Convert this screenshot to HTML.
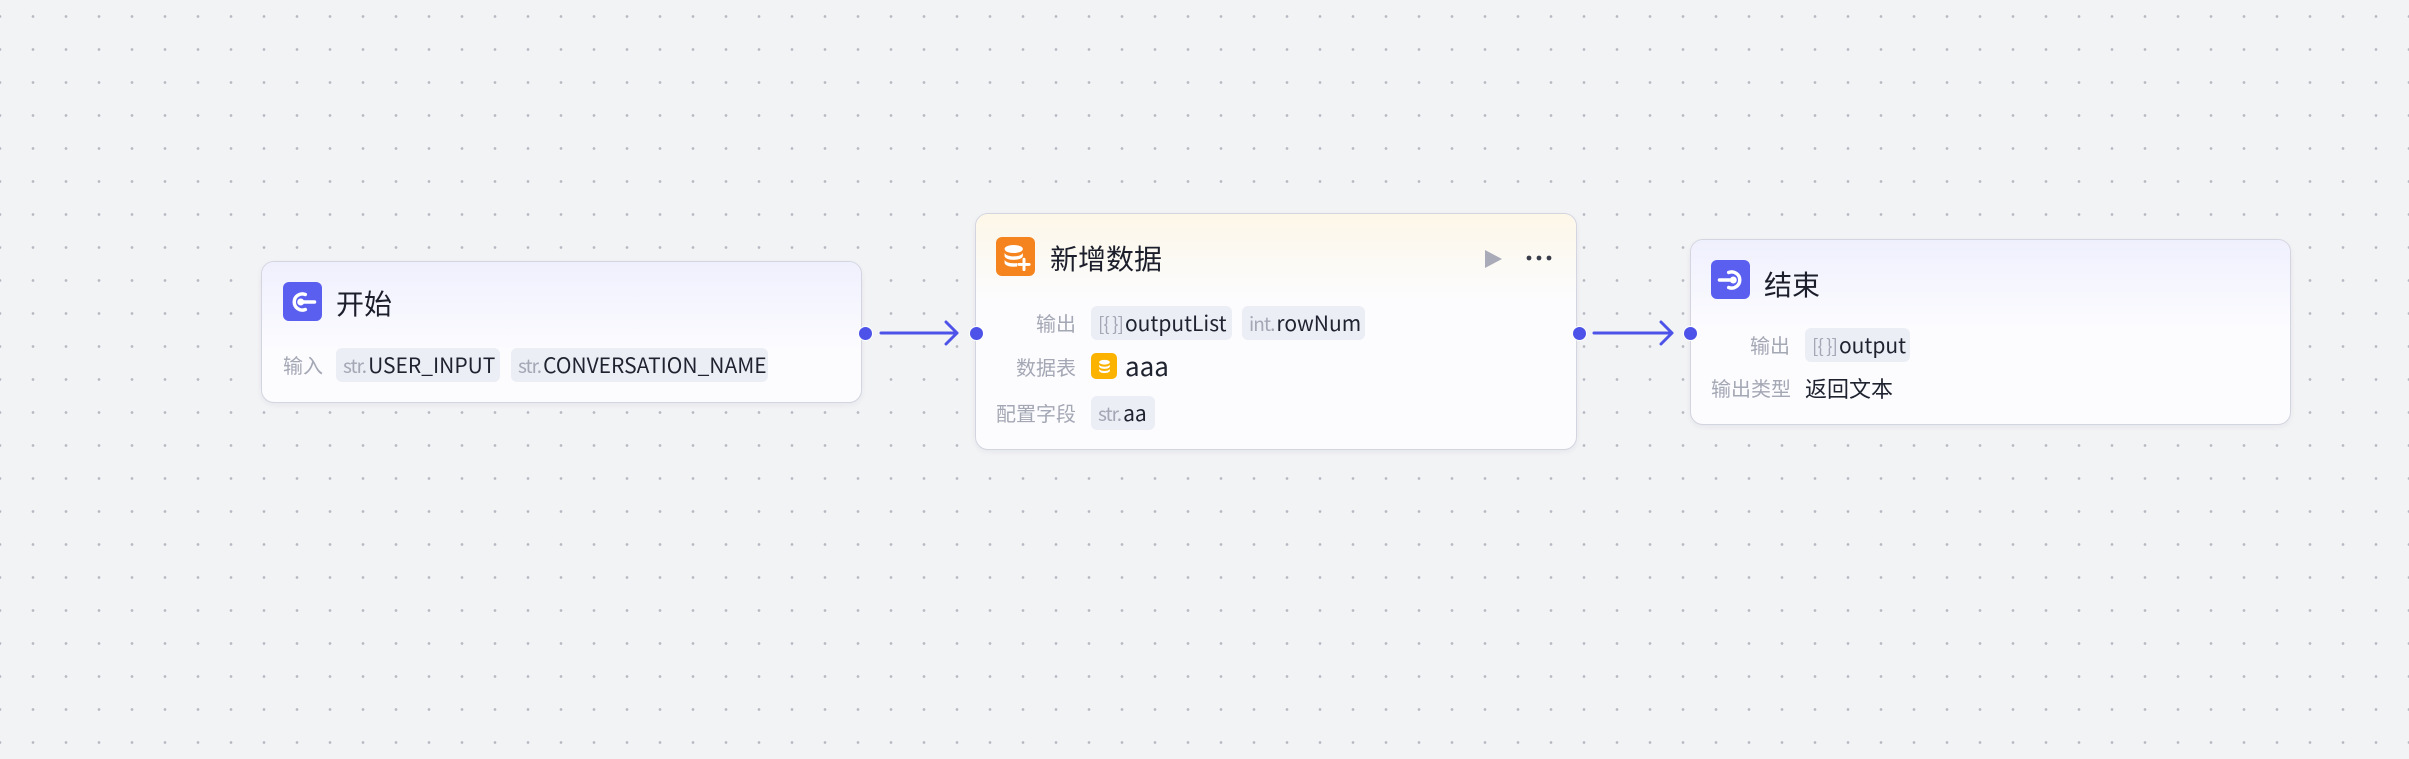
<!DOCTYPE html>
<html><head><meta charset="utf-8"><style>
*{box-sizing:border-box;margin:0;padding:0}
body{width:2409px;height:759px;overflow:hidden;background-color:#f2f3f5;
background-image:radial-gradient(circle,#b6b9c2 1.1px,transparent 1.6px);
background-size:33px 33px;background-position:-16.5px 0px;
font-family:"Liberation Sans","Noto Sans CJK SC",sans-serif;position:relative}
.node{position:absolute;border:1.5px solid #d3d5e0;border-radius:13px;background:#fcfcff;box-shadow:0 2px 6px rgba(30,40,80,.06)}
.hdr{position:absolute;left:0;top:0;right:0;height:90px;border-radius:12px 12px 0 0}
.ic{position:absolute;width:39px;height:39px;border-radius:6px;display:flex;align-items:center;justify-content:center}
.title{position:absolute;font-size:28px;color:#1c1f2b;font-family:"Noto Sans CJK SC",sans-serif;line-height:40px}
.lbl{position:absolute;font-size:20px;color:#a4a7b4;font-family:"Noto Sans CJK SC",sans-serif;line-height:34px;white-space:nowrap}
.tag{position:absolute;height:34px;border-radius:6px;background:#eceef6;font-size:21px;line-height:34px;color:#1f2330;padding:0 7px;white-space:nowrap;font-family:"Noto Sans CJK SC","Liberation Sans",sans-serif;overflow:hidden}
.tag i{font-style:normal;color:#a4a7b4;font-size:19px;margin-right:2px;letter-spacing:-1px}
.port{position:absolute;width:15px;height:15px;border-radius:50%;background:#4d53e8;border:1.5px solid #fff;margin:-7.5px 0 0 -7.5px}
</style></head><body>

<svg style="position:absolute;left:0;top:0" width="2409" height="759">
<g stroke="#4d53e8" stroke-width="3" fill="none" stroke-linecap="round" stroke-linejoin="round">
<path d="M881 333H957M946 322L957 333L946 344"/>
<path d="M1594 333H1672M1661 322L1672 333L1661 344"/>
</g></svg>

<div class="node" style="left:261px;top:261px;width:601px;height:142px">
 <div class="hdr" style="background:linear-gradient(#eff0fd,#fcfcff)"></div>
 <div class="ic" style="left:21px;top:20px;background:#5a5ff0">
  <svg width="30" height="30" viewBox="0 0 26 26"><path d="M15 6.5A7 7 0 1 0 15 19.5" stroke="#fff" stroke-width="3" fill="none" stroke-linecap="round"/><circle cx="11" cy="13" r="3" fill="#fff"/><path d="M11 13H23" stroke="#fff" stroke-width="3" stroke-linecap="round"/></svg>
 </div>
 <div class="title" style="left:74px;top:21px">开始</div>
 <div class="lbl" style="left:21px;top:86px">输入</div>
 <div class="tag" style="left:74px;top:86px;width:164px"><i>str.</i>USER_INPUT</div>
 <div class="tag" style="left:249px;top:86px;width:257px"><i>str.</i>CONVERSATION_NAME</div>
</div>
<div class="port" style="left:865px;top:333px"></div>

<div class="node" style="left:975px;top:213px;width:602px;height:237px">
 <div class="hdr" style="background:linear-gradient(#fdf7e8,#fcfcff)"></div>
 <div class="ic" style="left:20px;top:23px;background:#f5841f">
  <svg width="32" height="32" viewBox="0 0 28 28"><ellipse cx="12" cy="7" rx="8" ry="3.5" fill="#fff"/><path d="M4 10c0 2 3.5 3.5 8 3.5s8-1.5 8-3.5v3c0 2-3.5 3.5-8 3.5S4 15 4 13z" fill="#fff"/><path d="M4 16c0 2 3.5 3.5 8 3.5 1 0 2 0 3-.2v3c-1 .2-2 .2-3 .2-4.5 0-8-1.5-8-3.5z" fill="#fff"/><path d="M21 16v9M16.5 20.5h9" stroke="#fff" stroke-width="2.6" stroke-linecap="round"/></svg>
 </div>
 <div class="title" style="left:74px;top:24px">新增数据</div>
 <svg style="position:absolute;left:508px;top:35px" width="20" height="20"><path d="M1 1L18 10L1 19Z" fill="#a9acb8"/></svg>
 <svg style="position:absolute;left:548px;top:39px" width="32" height="10"><circle cx="5" cy="5" r="2.4" fill="#3a3d4a"/><circle cx="15" cy="5" r="2.4" fill="#3a3d4a"/><circle cx="25" cy="5" r="2.4" fill="#3a3d4a"/></svg>
 <div class="lbl" style="right:500px;top:92px">输出</div>
 <div class="tag" style="left:115px;top:92px;width:141px"><i>[{ }]</i>outputList</div>
 <div class="tag" style="left:266px;top:92px;width:123px"><i>int.</i>rowNum</div>
 <div class="lbl" style="right:500px;top:136px">数据表</div>
 <div class="ic" style="left:115px;top:139px;width:26px;height:26px;background:#fbb300;border-radius:5px">
  <svg width="15" height="15" viewBox="0 0 14 14"><ellipse cx="7" cy="3" rx="5" ry="2.2" fill="#fff"/><path d="M2 5c0 1.2 2.2 2.2 5 2.2s5-1 5-2.2v2c0 1.2-2.2 2.2-5 2.2S2 8.2 2 7z M2 9c0 1.2 2.2 2.2 5 2.2s5-1 5-2.2v2c0 1.2-2.2 2.2-5 2.2S2 12.2 2 11z" fill="#fff"/></svg>
 </div>
 <div style="position:absolute;left:149px;top:134px;font-size:26px;line-height:36px;color:#1f2330;font-family:'Noto Sans CJK SC',sans-serif">aaa</div>
 <div class="lbl" style="right:500px;top:182px">配置字段</div>
 <div class="tag" style="left:115px;top:182px;width:64px"><i>str.</i>aa</div>
</div>
<div class="port" style="left:976px;top:333px"></div>
<div class="port" style="left:1579px;top:333px"></div>

<div class="node" style="left:1690px;top:239px;width:601px;height:186px">
 <div class="hdr" style="background:linear-gradient(#eff0fd,#fcfcff)"></div>
 <div class="ic" style="left:20px;top:20px;background:#5a5ff0">
  <svg width="30" height="30" viewBox="0 0 26 26"><path d="M11 6.5A7 7 0 1 1 11 19.5" stroke="#fff" stroke-width="3" fill="none" stroke-linecap="round"/><circle cx="15" cy="13" r="3" fill="#fff"/><path d="M3 13H15" stroke="#fff" stroke-width="3" stroke-linecap="round"/></svg>
 </div>
 <div class="title" style="left:73px;top:24px">结束</div>
 <div class="lbl" style="right:500px;top:88px">输出</div>
 <div class="tag" style="left:114px;top:88px;width:105px"><i>[{ }]</i>output</div>
 <div class="lbl" style="left:20px;top:131px">输出类型</div>
 <div style="position:absolute;left:114px;top:131px;font-size:22px;line-height:34px;color:#1f2330;font-family:'Noto Sans CJK SC',sans-serif">返回文本</div>
</div>
<div class="port" style="left:1690px;top:333px"></div>
</body></html>
